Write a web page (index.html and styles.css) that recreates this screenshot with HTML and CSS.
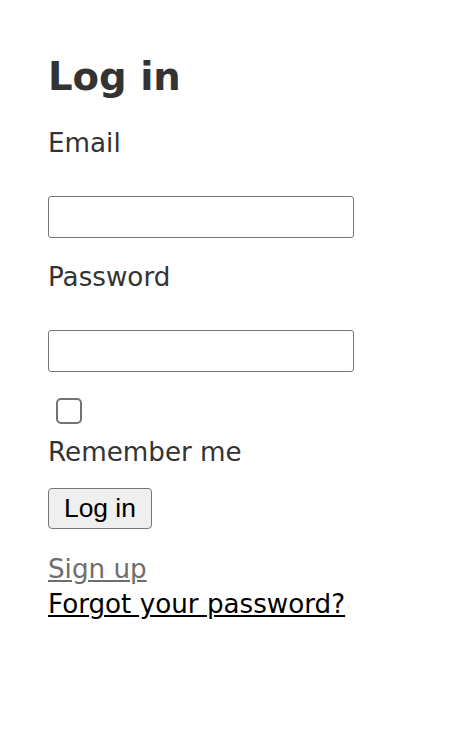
FILE: index.html
```html
<!DOCTYPE html>
<html lang="en">
  <head>
    <meta charset="utf-8">
    <title>Log in</title>
    <link rel="stylesheet" href="styles.css">
  </head>
  <body>
    <div class="page">
      <h1>Log in</h1>
      <form class="login-form">
        <div class="field">
          <label for="user_email">Email</label>
          <input id="user_email" type="email" class="text-input">
        </div>
        <div class="field">
          <label for="user_password">Password</label>
          <input id="user_password" type="password" class="text-input">
        </div>
        <div class="field remember">
          <input id="user_remember_me" type="checkbox" class="check">
          <label for="user_remember_me">Remember me</label>
        </div>
        <div class="actions">
          <input type="submit" value="Log in" class="btn">
        </div>
      </form>
      <div class="links">
        <a href="#" class="signup">Sign up</a>
        <a href="#" class="forgot">Forgot your password?</a>
      </div>
    </div>
  </body>
</html>
```

FILE: styles.css
```css
body {
  margin: 0;
  padding: 0;
  background: #ffffff;
  color: #333333;
  font-family: "DejaVu Sans", Verdana, sans-serif;
  font-size: 26.2px;
  line-height: 36px;
}

.page {
  padding: 54px 0 0 48px;
}

h1 {
  margin: 0 0 25px;
  font-size: 38.6px;
  line-height: 46px;
  font-weight: bold;
}

.field label {
  display: block;
}

.text-input {
  display: block;
  box-sizing: border-box;
  width: 306px;
  height: 42px;
  margin: 35px 0 21px;
  border: 1px solid #767676;
  border-radius: 3px;
  background: #fff;
  padding: 2px 6px;
  font-size: 20px;
}

.remember {
  padding-top: 5px;
}

.check {
  display: block;
  appearance: none;
  -webkit-appearance: none;
  box-sizing: border-box;
  width: 26px;
  height: 26px;
  margin: 0 0 10px 8px;
  border: 2px solid #737373;
  border-radius: 5px;
  background: #fff;
}

.actions {
  margin-top: 18px;
}

.btn {
  box-sizing: border-box;
  height: 41px;
  margin: 0;
  padding: 0 15px;
  font-family: "Liberation Sans", Arial, sans-serif;
  font-size: 26.4px;
  color: #000;
  background: #efefef;
  border: 1.5px solid #767676;
  border-radius: 4px;
}

.links {
  margin-top: 23px;
  line-height: 35px;
}

.links a {
  display: block;
  width: max-content;
}

.signup {
  color: #6e6e6e;
}

.forgot {
  color: #000;
}
```
